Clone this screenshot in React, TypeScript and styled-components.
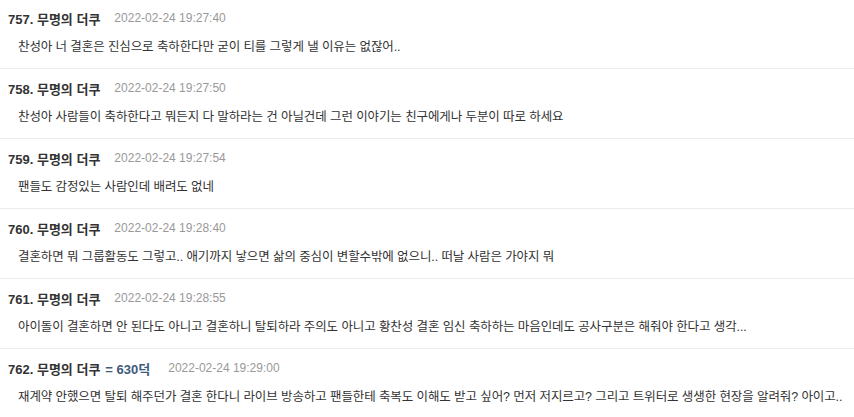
import React from 'react';
import styled, { createGlobalStyle } from 'styled-components';

type Comment = {
  no: number;
  name: string;
  badge?: string;
  date: string;
  text: string;
};

const comments: Comment[] = [
  { no: 757, name: '무명의 더쿠', date: '2022-02-24 19:27:40', text: '찬성아 너 결혼은 진심으로 축하한다만 굳이 티를 그렇게 낼 이유는 없잖어..' },
  { no: 758, name: '무명의 더쿠', date: '2022-02-24 19:27:50', text: '찬성아 사람들이 축하한다고 뭐든지 다 말하라는 건 아닐건데 그런 이야기는 친구에게나 두분이 따로 하세요' },
  { no: 759, name: '무명의 더쿠', date: '2022-02-24 19:27:54', text: '팬들도 감정있는 사람인데 배려도 없네' },
  { no: 760, name: '무명의 더쿠', date: '2022-02-24 19:28:40', text: '결혼하면 뭐 그룹활동도 그렇고.. 애기까지 낳으면 삶의 중심이 변할수밖에 없으니.. 떠날 사람은 가야지 뭐' },
  { no: 761, name: '무명의 더쿠', date: '2022-02-24 19:28:55', text: '아이돌이 결혼하면 안 된다도 아니고 결혼하니 탈퇴하라 주의도 아니고 황찬성 결혼 임신 축하하는 마음인데도 공사구분은 해줘야 한다고 생각...' },
  { no: 762, name: '무명의 더쿠', badge: '= 630덕', date: '2022-02-24 19:29:00', text: '재계약 안했으면 탈퇴 해주던가 결혼 한다니 라이브 방송하고 팬들한테 축복도 이해도 받고 싶어? 먼저 저지르고? 그리고 트위터로 생생한 현장을 알려줘? 아이고..' },
];

const GlobalStyle = createGlobalStyle`
  html, body {
    margin: 0;
    padding: 0;
    background: #fff;
  }
  body {
    font-family: "Liberation Sans", "Noto Sans CJK KR", sans-serif;
    color: #333;
    overflow: hidden;
  }
`;

const CommentList = styled.ul`
  list-style: none;
  margin: -1px 0 0;
  padding: 0;
`;

const CommentRow = styled.li`
  padding: 11px 8px 12px;
  border-bottom: 1px solid #ebebeb;
`;

const CommentHead = styled.div`
  display: flex;
  align-items: center;
  height: 16px;
`;

const Author = styled.span`
  font-size: 13px;
  font-weight: 700;
  color: #333;
`;

const Badge = styled.span`
  color: #3d5b7c;
  margin-left: 5px;
  margin-right: 4px;
`;

const DateText = styled.span`
  margin-left: 14px;
  font-size: 12px;
  color: #999;
`;

const Body = styled.p`
  margin: 12px 0 0 10px;
  font-size: 12.5px;
  line-height: 18px;
  color: #333;
  letter-spacing: -0.1px;
  white-space: nowrap;
`;

export default function App() {
  return (
    <>
      <GlobalStyle />
      <CommentList>
        {comments.map((c) => (
          <CommentRow key={c.no}>
            <CommentHead>
              <Author>
                {c.no}. {c.name}
                {c.badge && <Badge>{c.badge}</Badge>}
              </Author>
              <DateText>{c.date}</DateText>
            </CommentHead>
            <Body>{c.text}</Body>
          </CommentRow>
        ))}
      </CommentList>
    </>
  );
}
